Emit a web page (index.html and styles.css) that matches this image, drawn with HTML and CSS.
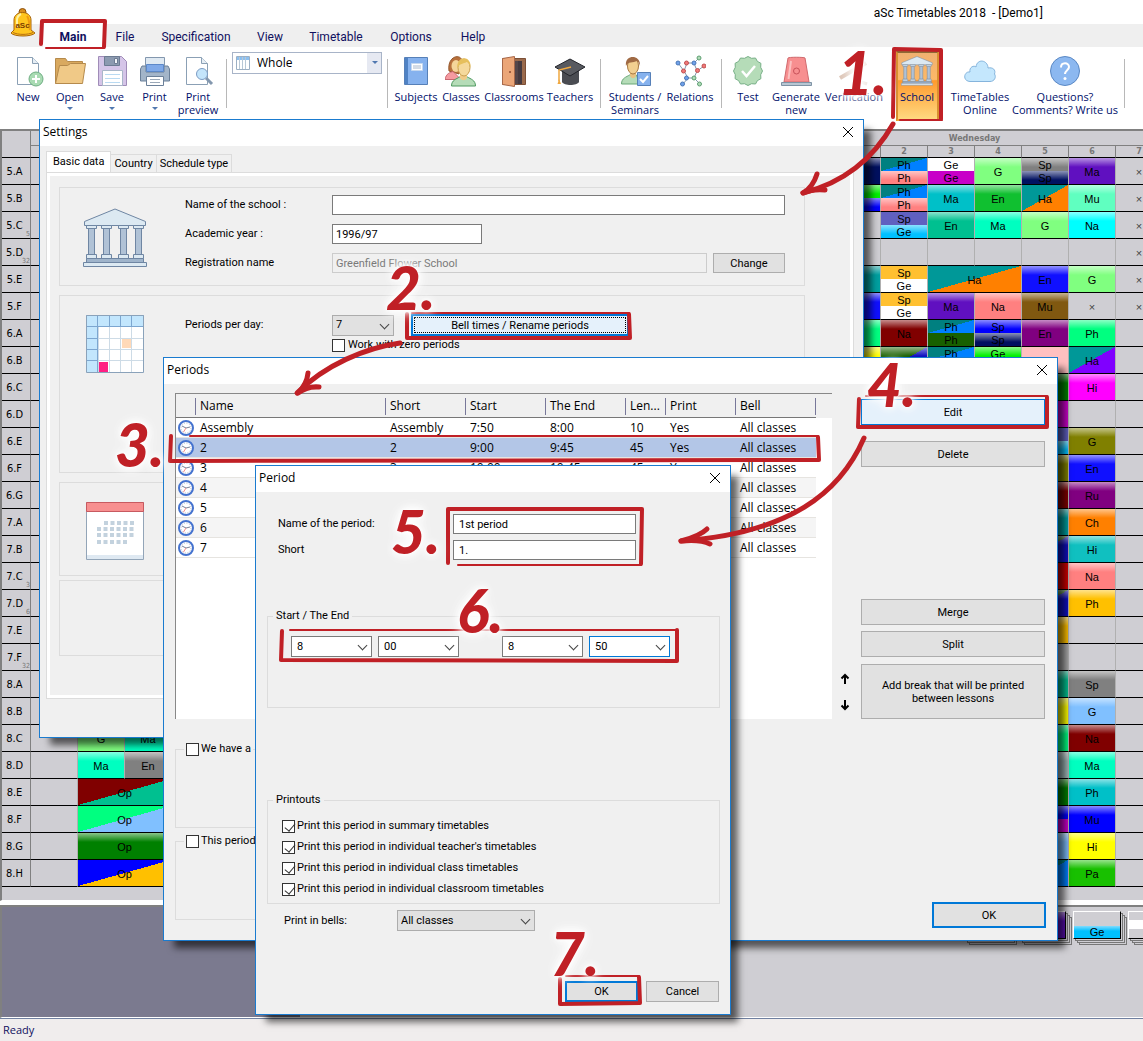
FILE: index.html
```html
<!DOCTYPE html>
<html lang="en">
<head>
<meta charset="utf-8">
<title>aSc Timetables 2018 - [Demo1]</title>
<link rel="stylesheet" href="styles.css">
</head>
<body>
<svg class="defs" aria-hidden="true">
  <symbol id="i-school" viewBox="0 0 64 60">
    <g stroke="#6f86a3" stroke-width="1" fill="#dce9f2">
      <path d="M1.500 13.500 L32 1 L62.500 13.500 V17.500 H1.500 Z"/>
      <path fill="#b0c2d6" d="M5.500 20.500h6v26h-6zM20.500 20.500h6v26h-6zM37.500 20.500h6v26h-6zM52.500 20.500h6v26h-6z"/>
      <path d="M3.500 17.500h10v3h-10zM18.500 17.500h10v3h-10zM35.500 17.500h10v3h-10zM50.500 17.500h10v3h-10zM3.500 46.500h10v4h-10zM18.500 46.500h10v4h-10zM35.500 46.500h10v4h-10zM50.500 46.500h10v4h-10z"/>
      <path fill="#9fb4cb" d="M3.500 50.500h57v4h-57z"/>
      <path d="M.5 54.500h63v4h-63z"/>
    </g>
  </symbol>
  <symbol id="i-clock" viewBox="0 0 16 16">
    <circle cx="8" cy="8" r="7" fill="#fff" stroke="#4573cf" stroke-width="2"/>
    <circle cx="8" cy="8" r="5" fill="none" stroke="#a9b3c9" stroke-dasharray="1 1.600"/>
    <path d="M4 6 L8 8 L12 7" fill="none" stroke="#7b8397"/>
    <path d="M8 8 L5.500 12" stroke="#f08a8a"/>
  </symbol>
  <symbol id="i-close" viewBox="0 0 12 12"><path d="M1 1 L11 11 M11 1 L1 11" stroke="#000" fill="none"/></symbol>
</svg>

<header class="app-head">
  <svg class="bell" viewBox="0 0 26 30" aria-hidden="true">
    <circle cx="12.500" cy="4" r="3.500" fill="#d98e1c" stroke="#8a4d08"/>
    <path d="M4 22 V12 C4 2 21 2 21 12 V22 L25 25 C22 29 4 29 1 25 Z" fill="#ffc51e" stroke="#a8640c"/>
    <path d="M7 20 V12 C7 8 9 7 11 6" fill="none" stroke="#fff2a0" stroke-width="2"/>
    <path d="M17 8 C20 12 19 18 20 22" fill="none" stroke="#f09a10" stroke-width="2"/>
    <path d="M3 24.500 C8 27 18 27 23 24.500" fill="none" stroke="#b86f10"/>
    <text x="12.500" y="20" text-anchor="middle" class="bell-text">aSc</text>
  </svg>
  <h1>aSc Timetables 2018&nbsp; - [Demo1]</h1>
  <nav class="menu">
    <a href="#" class="on">Main</a><a href="#">File</a><a href="#">Specification</a><a href="#">View</a><a href="#">Timetable</a><a href="#">Options</a><a href="#">Help</a>
  </nav>
</header>

<div class="ribbon">
  <button class="tool"><svg viewBox="0 0 32 32"><path d="M5.500 2.500h15l6 6v21h-21z" fill="#fff" stroke="#8ba0b5"/><path d="M20.500 2.500v6h6" fill="#e6eef5" stroke="#8ba0b5"/><circle cx="24" cy="24" r="7" fill="#a9dbb3" stroke="#6fae83"/><path d="M24 20v8M20 24h8" stroke="#fff" stroke-width="2"/></svg>New</button>
  <button class="tool more"><svg viewBox="0 0 32 32"><path d="M1.500 28.500v-25h10l2 3h15v5" fill="#d9a95f" stroke="#b58a4c"/><path d="M1.500 28.500l4-18h8l3-2h15l-3 20z" fill="#f0c987" stroke="#b58a4c"/></svg>Open</button>
  <button class="tool more"><svg viewBox="0 0 32 32"><path d="M2.500 1.500h23l5 5v24h-28z" fill="#d5c5e8" stroke="#a08cb8"/><path d="M8.500 1.500h15v9h-15z" fill="#8c9ab0" stroke="#6d7b92"/><path d="M18.500 3.500h3v5h-3z" fill="#f2f4f8" stroke="#6d7b92"/><path d="M6.500 15.500h20v15h-20z" fill="#fff" stroke="#a9b7c9"/><path d="M9 19.500h15M9 23.500h15M9 27.500h15" stroke="#b9daf2"/></svg>Save</button>
  <button class="tool more"><svg viewBox="0 0 32 32"><path d="M6.500 2.500h19v8h-19z" fill="#dfe9f2" stroke="#8397ae"/><path d="M3 11h4v6h18v-6h4l1.500 3v12h-29v-12z" fill="#a3b5c9" stroke="#6b8099"/><path d="M7.500 9.500h17v7h-17z" fill="#7fa9e8" stroke="#5c88c9"/><path d="M7.500 21.500h17v9h-17z" fill="#fff" stroke="#6b8099"/><path d="M11 24.500h10M11 27.500h10" stroke="#9aa8b8"/></svg>Print</button>
  <button class="tool"><svg viewBox="0 0 32 32"><path d="M4.500 2.500h15l6 6v21h-21z" fill="#fff" stroke="#8ba0b5"/><path d="M19.500 2.500v6h6" fill="#e6eef5" stroke="#8ba0b5"/><path d="M24 23l6 6" stroke="#8397ae" stroke-width="3"/><circle cx="20" cy="19" r="5.500" fill="#c4e5fb" stroke="#7c9cc4"/></svg>Print<br>preview</button>
  <i class="sep"></i>
  <span class="combo whole">
    <svg viewBox="0 0 14 14" aria-hidden="true"><path d="M.5.500h13v13h-13z" fill="#fff" stroke="#9cb0c4"/><path d="M1 1h12v3H1z" fill="#8cc0f0"/><path d="M3.500 1v12M6.500 1v12M9.500 1v12" stroke="#b8c8d6"/></svg>
    <select aria-label="View"><option>Whole</option></select>
  </span>
  <i class="sep"></i>
  <button class="tool"><svg viewBox="0 0 32 32"><path d="M4.500 2.500h23v27h-23z" fill="#86b2ee" stroke="#5680b8"/><path d="M5 3h3v26h-3z" fill="#4f82c4"/><path d="M11.500 8.500h11v7h-11z" fill="#fff" stroke="#c5d8ef"/><path d="M13 11h8M13 13h8" stroke="#a8b8cc"/></svg>Subjects</button>
  <button class="tool"><svg viewBox="0 0 32 32"><path d="M4 16C2 2 14-2 17 5l-3 14z" fill="#b8703c" stroke="#94572c"/><path d="M0 24.500c1-6 5-7 8-8l8 8z" fill="#f59aa0" stroke="#c86870"/><ellipse cx="11" cy="11" rx="4.500" ry="6" fill="#f5d59a"/><path d="M6.500 31c0-6 5-7 8-9h8c3 2 8 3 8 9z" fill="#b5dcb8" stroke="#4e9a60"/><path d="M15 18h7v5c-2 3-5 3-7 0z" fill="#f0cb88"/><ellipse cx="19" cy="12.500" rx="6" ry="8.500" fill="#f5d99c" stroke="#c9a050"/><path d="M12.500 13C11 0 27 0 25.500 13c-1-5-2-5-4-6-3 2-7 1-9 6z" fill="#e6bf5c"/></svg>Classes</button>
  <button class="tool"><svg viewBox="0 0 32 32"><path d="M4.500 3.500h23v26h-23z" fill="#9a6a4c" stroke="#7c4f36"/><path d="M13 6h11v23h-11z" fill="#54464a"/><path d="M20 6h4v23h-4z" fill="#453a40"/><path d="M4.500 3.500l12-2v30l-12-2z" fill="#eba678" stroke="#a8694a"/><circle cx="12" cy="17" r="1" fill="#8a4a30"/></svg>Classrooms</button>
  <button class="tool"><svg viewBox="0 0 32 32"><path d="M8 15v12c2 4 15 4 17 0v-12z" fill="#4a4c52"/><path d="M1 12L16 4l15 8-15 9z" fill="#585a60" stroke="#22242a"/><path d="M17 12L5 15v11" fill="none" stroke="#f0a840" stroke-width="1.500"/><path d="M3.500 29l1.500-5 2 5z" fill="#f0a840"/></svg>Teachers</button>
  <i class="sep"></i>
  <button class="tool"><svg viewBox="0 0 32 32"><path d="M2.500 29c0-6 5-7 8-9h7l3 9z" fill="#b5dcb8" stroke="#6aa878"/><path d="M11 16h6v5c-2 3-4 3-6 0z" fill="#e8c080"/><ellipse cx="14" cy="11" rx="5.500" ry="8" fill="#f2cf90" stroke="#a87840"/><path d="M7 11C5-1 22-1 21 11c-1-4-2-4-3-5-4 2-9 0-11 5z" fill="#a06a44"/><path d="M18.500 17.500h13v13h-13z" fill="#86b2ee" stroke="#5680b8"/><path d="M21 24l3 3 5-6" fill="none" stroke="#fff" stroke-width="2"/></svg>Students /<br>Seminars</button>
  <button class="tool"><svg viewBox="0 0 32 32"><path d="M4 8l6 8 4 7M12 8h8l3 8-3 7h-6M20 8l5-5M23 16l7-5M14 23l-5 6M20 23l6 6M10 16l3-8" fill="none" stroke="#8498ac"/><g fill="#f07878" stroke="#c05050"><circle cx="9.500" cy="16" r="2"/><circle cx="12.500" cy="8" r="2"/><circle cx="23.500" cy="15.500" r="2"/><circle cx="30" cy="11" r="2"/></g><g fill="#6fa0e8" stroke="#4a78b8"><circle cx="4" cy="8" r="2"/><circle cx="20" cy="8" r="2"/><circle cx="12.500" cy="23" r="2"/><circle cx="8.500" cy="29" r="2"/></g><g fill="#b0dcb8" stroke="#5f9f72"><circle cx="25" cy="3" r="2"/><circle cx="20" cy="23" r="2"/><circle cx="25.500" cy="29" r="2"/></g></svg>Relations</button>
  <i class="sep"></i>
  <button class="tool"><svg viewBox="0 0 32 32"><path d="M16 1.500l3.500 1.800 4-.3 1.900 3.400 3.500 1.900-.2 4L30.500 16l-1.800 3.700.2 4-3.500 1.900-1.900 3.400-4-.3L16 30.500l-3.500-1.800-4 .3-1.900-3.400-3.500-1.900.2-4L1.500 16l1.800-3.700-.2-4 3.500-1.900L8.500 3l4 .3z" fill="#b5dcb8" stroke="#78b088"/><path d="M10 16l4.500 5L23 11" fill="none" stroke="#fff" stroke-width="2.500"/></svg>Test</button>
  <button class="tool"><svg viewBox="0 0 32 32"><path d="M4 27L8 3c.3-1 16-1 17 0l4 24z" fill="#f78f90" stroke="#d06a6e"/><path d="M8.500 24L11 6" stroke="#fbc0c0" stroke-width="2"/><circle cx="16.500" cy="16" r="3" fill="none" stroke="#c8525a"/><path d="M1.500 27.500h30v3h-30z" fill="#b8c6d2" stroke="#7f93a5"/></svg>Generate<br>new</button>
  <button class="tool"><svg viewBox="0 0 32 32"><path d="M2 23L28 8" stroke="#dcc3b4" stroke-width="4"/><path d="M20 26l9 3" stroke="#e6d6cc" stroke-width="3"/></svg>Verification</button>
  <button class="tool school"><svg viewBox="0 0 64 60"><use href="#i-school"/></svg>School</button>
  <button class="tool"><svg viewBox="0 0 32 32"><path d="M6 26.500C-2 26 0 16 6 17 5 12 10 10 12 12 13 3 24 5 24 13c5-1 8 2 6.500 6 2 3 0 7.500-4.500 7.500z" fill="#c4e7fd" stroke="#85b4dc"/></svg>TimeTables<br>Online</button>
  <button class="tool"><svg viewBox="0 0 32 32"><circle cx="16" cy="16" r="14.500" fill="#8cb8f0" stroke="#5a88c4"/><path d="M12 12.500c0-5.500 8-5.500 8-.5 0 3-4 3.500-4 7" fill="none" stroke="#fff" stroke-width="2"/><circle cx="16" cy="23.500" r="1.500" fill="#fff"/></svg>Questions?<br>Comments? Write us</button>
  <i class="sep"></i>
</div>

<main class="board">
<table class="timetable">
<colgroup><col class="c-name"><col class="c-hour"><col class="c-hour"><col class="c-hour"><col><col class="c-hour"><col class="c-hour"><col class="c-hour"><col class="c-hour"><col class="c-hour"><col class="c-hour"><col class="c-hour"><col class="c-hour"></colgroup>
<thead>
<tr class="days"><th rowspan="2" class="corner"></th><th colspan="4"></th><th colspan="8">Wednesday</th></tr>
<tr class="hours"><th></th><th></th><th></th><th></th><th>0</th><th>1</th><th>2</th><th>3</th><th>4</th><th>5</th><th>6</th><th>7</th></tr>
</thead>
<tbody>
<tr><th>5.A</th><td><td><td><td><td><td class="navy"><td><div class="phys">Ph</div><div class="rose">Ph</div><td><div class="white">Ge</div><div class="magenta">Ge</div><td class="lime">G<td><div class="gray">Sp</div><div class="navy">Sp</div><td class="violet">Ma<td class="x">×</tr>
<tr><th>5.B</th><td><td><td><td><td><td><div class="green">&nbsp;</div><div class="blue">&nbsp;</div><td><div class="phys">Ph</div><div class="rose">Ph</div><td class="cyan">Ma<td class="leaf">En<td class="hand">Ha<td class="mint">Mu<td class="x">×</tr>
<tr><th>5.C<small>5</small></th><td><td><td><td><td><td><td><div class="slate">Sp</div><div class="sky">Ge</div><td class="jade">En<td class="aqua">Ma<td class="lime">G<td class="bright">Na<td class="x">×</tr>
<tr><th>5.D<small>32</small></th><td><td><td><td><td><td><td><td><td><td><td><td class="x">×</tr>
<tr><th>5.E</th><td><td><td><td><td><td class="teal"><td><div class="amber">Sp</div><div class="white">Ge</div><td colspan="2" class="hand">Ha<td class="royal">En<td class="lime">G<td class="x">×</tr>
<tr><th>5.F</th><td><td><td><td><td><td class="royal"><td><div class="amber">Sp</div><div class="white">Ge</div><td class="violet">Ma<td class="rose">Na<td class="brown">Mu<td class="x">×<td class="x">×</tr>
<tr><th>6.A</th><td><td><td><td><td><td class="spring"><td class="maroon">Na<td><div class="phys">Ph</div><div class="forest">Ph</div><td><div class="blue">Sp</div><div class="navy">Sp</div><td class="purple">En<td class="spring">Ph<td></tr>
<tr><th>6.B</th><td><td><td><td><td><td class="yellow"><td class="forest-blue"><td><div class="phys">Ph</div><div class="forest">Ph</div><td><div class="green">Ge</div><div class="gray">&nbsp;</div><td class="blush"><td class="hand-violet">Ha<td></tr>
<tr><th>6.C</th><td><td><td><td><td><td><td><td><td><td class="emerald"><td class="pink">Hi<td></tr>
<tr><th>6.D</th><td><td><td><td><td><td><td><td><td><td class="magenta"><td><td></tr>
<tr><th>6.E</th><td><td><td><td><td><td><td><td><td><td><div class="slate">&nbsp;</div><div class="sky">&nbsp;</div><td class="olive">G<td></tr>
<tr><th>6.F</th><td><td><td><td><td><td><td><td><td><td class="olive"><td class="royal">En<td></tr>
<tr><th>6.G</th><td><td><td><td><td><td><td><td><td><td class="maroon"><td class="purple">Ru<td></tr>
<tr><th>7.A</th><td><td><td><td><td><td><td><td><td><td class="teal"><td class="orange">Ch<td></tr>
<tr><th>7.B</th><td><td><td><td><td><td><td><td><td><td class="forest-blue"><td class="turquoise">Hi<td></tr>
<tr><th>7.C<small>3</small></th><td><td><td><td><td><td><td><td><td><td class="red"><td class="rose">Na<td></tr>
<tr><th>7.D<small>6</small></th><td><td><td><td><td><td><td><td><td><td class="forest-blue"><td class="gold">Ph<td></tr>
<tr><th>7.E</th><td><td><td><td><td><td><td><td><td><td class="gold"><td><td></tr>
<tr><th>7.F<small>32</small></th><td><td><td><td><td><td><td><td><td><td class="ash"><td><td></tr>
<tr><th>8.A</th><td><td><td><td><td><td><td><td><td><td class="jade"><td class="gray">Sp<td></tr>
<tr><th>8.B</th><td><td><td><td><td><td><td><td><td><td class="yellow"><td class="pale">G<td></tr>
<tr><th>8.C</th><td><td class="lime">G<td class="aqua">Ma<td><td><td><td><td><td><td class="spring"><td class="maroon">Na<td></tr>
<tr><th>8.D</th><td><td class="aqua">Ma<td class="gray">En<td><td><td><td><td><td><td class="mist"><td class="aqua">Ma<td></tr>
<tr><th>8.E</th><td><td colspan="2" class="maroon-jade">Op<td><td><td><td><td><td><td class="emerald"><td class="cyan">Ph<td></tr>
<tr><th>8.F</th><td><td colspan="2" class="spring-pale">Op<td><td><td><td><td><td><td><div class="blue">&nbsp;</div><div class="magenta">&nbsp;</div><td class="blue">Mu<td></tr>
<tr><th>8.G</th><td><td colspan="2" class="emerald">Op<td><td><td><td><td><td><td class="pale"><td class="yellow">Hi<td></tr>
<tr><th>8.H</th><td><td colspan="2" class="blue-gold">Op<td><td><td><td><td><td><td class="phys"><td class="grass">Pa<td></tr>
</tbody>
</table>
</main>

<section class="tray">
  <div class="tray-info"></div>
  <div class="tray-cards">
    <span class="card violet"></span><span class="card violet"></span><span class="card half">Ge</span><span class="card plain"></span>
  </div>
</section>
<footer class="status">Ready</footer>

<section class="window settings">
  <header><h2>Settings</h2><button aria-label="Close settings"><svg><use href="#i-close"/></svg></button></header>
  <div class="tabs"><button class="on">Basic data</button><button>Country</button><button>Schedule type</button></div>
  <div class="panel">
    <div class="box school-box">
      <svg class="pic-school" viewBox="0 0 64 60" aria-hidden="true"><use href="#i-school"/></svg>
      <div class="rows">
        <div class="row"><label for="school">Name of the school :</label><input id="school" class="grow"></div>
        <div class="row"><label for="year">Academic year :</label><input id="year" class="year" value="1996/97"></div>
        <div class="row"><label for="reg">Registration name</label><input id="reg" class="grow" disabled value="Greenfield Flower School"><button class="btn change">Change</button></div>
      </div>
    </div>
    <div class="box periods-box">
      <svg class="pic" viewBox="0 0 58 58" aria-hidden="true"><path d="M.5.500h57v57h-57z" fill="#fff"/><path d="M.5.500h57v11h-57zM.5.500h11v57h-11z" fill="#c2e6fd"/><path d="M12.500 12v45M23.500 12v45M34.500 12v45M45.500 12v45M12 23.500h45M12 34.500h45M12 45.500h45" stroke="#cddbe6"/><path d="M36 24h9v9h-9z" fill="#ffd9b8"/><path d="M13 47h9v10h-9z" fill="#ff1f83"/><path d="M.5.500h57v11h-57zM11.500 0v57M23.500 0v11M34.500 0v11M45.500 0v11M0 23.500h11M0 34.500h11M0 45.500h11" fill="none" stroke="#7ca6d0"/><path d="M.5.500h57v57h-57z" fill="none" stroke="#8aa2ba"/></svg>
      <div class="rows">
        <div class="row"><label for="ppd">Periods per day:</label><span class="combo ppd"><select id="ppd"><option>7</option></select></span><button class="btn bell-times">Bell times / Rename periods</button></div>
        <label class="check zero"><input type="checkbox">Work with zero periods</label>
      </div>
    </div>
    <div class="box days-box">
      <svg class="pic" viewBox="0 0 58 58" aria-hidden="true"><path d="M.5.500h57v57h-57z" fill="#fff" stroke="#93a5b8"/><path d="M1 53h56v4H1z" fill="#dfe9f2"/><path d="M.5.500h57v9h-57z" fill="#f78f8f" stroke="#c75a60"/><path d="M18 21h30M11 27h37M11 33h37M11 40h32" stroke="#c3d2de" stroke-width="4" stroke-dasharray="4 2.500"/></svg>
    </div>
    <div class="box last-box"></div>
  </div>
</section>

<section class="window periods">
  <header><h2>Periods</h2><button aria-label="Close periods"><svg><use href="#i-close"/></svg></button></header>
  <div class="periods-top">
    <div class="list">
      <table>
        <colgroup><col class="w20"><col class="w190"><col class="w80"><col class="w80"><col class="w80"><col class="w40"><col class="w70"><col class="w80"></colgroup>
        <thead><tr><th></th><th>Name</th><th>Short</th><th>Start</th><th>The End</th><th>Len...</th><th>Print</th><th>Bell</th></tr></thead>
        <tbody>
        <tr><td><svg><use href="#i-clock"/></svg></td><td>Assembly</td><td>Assembly</td><td>7:50</td><td>8:00</td><td>10</td><td>Yes</td><td>All classes</td></tr>
        <tr class="sel"><td><svg><use href="#i-clock"/></svg></td><td>2</td><td>2</td><td>9:00</td><td>9:45</td><td>45</td><td>Yes</td><td>All classes</td></tr>
        <tr><td><svg><use href="#i-clock"/></svg></td><td>3</td><td>3</td><td>10:00</td><td>10:45</td><td>45</td><td>Yes</td><td>All classes</td></tr>
        <tr><td><svg><use href="#i-clock"/></svg></td><td>4</td><td></td><td></td><td></td><td></td><td></td><td>All classes</td></tr>
        <tr><td><svg><use href="#i-clock"/></svg></td><td>5</td><td></td><td></td><td></td><td></td><td></td><td>All classes</td></tr>
        <tr><td><svg><use href="#i-clock"/></svg></td><td>6</td><td></td><td></td><td></td><td></td><td></td><td>All classes</td></tr>
        <tr><td><svg><use href="#i-clock"/></svg></td><td>7</td><td></td><td></td><td></td><td></td><td></td><td>All classes</td></tr>
        </tbody>
      </table>
    </div>
    <div class="movers">
      <button aria-label="Move up"><svg viewBox="0 0 10 12"><path d="M5 11V2M1.500 5.500L5 2l3.500 3.500" fill="none" stroke="#000" stroke-width="2"/></svg></button>
      <button aria-label="Move down"><svg viewBox="0 0 10 12"><path d="M5 1v9M1.500 6.500L5 10l3.500-3.500" fill="none" stroke="#000" stroke-width="2"/></svg></button>
    </div>
    <div class="actions">
      <button class="btn hot">Edit</button>
      <button class="btn">Delete</button>
      <button class="btn merge">Merge</button>
      <button class="btn split">Split</button>
      <button class="btn tall">Add break that will be printed<br>between lessons</button>
    </div>
  </div>
  <div class="periods-bottom">
    <div class="options">
      <fieldset><legend><label class="check"><input type="checkbox">We have a</label></legend></fieldset>
      <fieldset><legend><label class="check"><input type="checkbox">This period</label></legend></fieldset>
    </div>
    <button class="btn default ok">OK</button>
  </div>
</section>

<section class="window period">
  <header><h2>Period</h2><button aria-label="Close period"><svg><use href="#i-close"/></svg></button></header>
  <div class="names">
    <label for="pname">Name of the period:</label><input id="pname" value="1st period">
    <label for="pshort">Short</label><input id="pshort" value="1.">
  </div>
  <fieldset class="times"><legend>Start / The End</legend>
    <div class="time-row">
      <span class="combo light"><select aria-label="Start hour"><option>8</option></select></span>
      <span class="combo light"><select aria-label="Start minute"><option>00</option></select></span>
      <span class="combo light end"><select aria-label="End hour"><option>8</option></select></span>
      <span class="combo light focus"><select aria-label="End minute"><option>50</option></select></span>
    </div>
  </fieldset>
  <fieldset class="printouts"><legend>Printouts</legend>
    <div class="check-list">
      <label class="check"><input type="checkbox" checked>Print this period in summary timetables</label>
      <label class="check"><input type="checkbox" checked>Print this period in individual teacher's timetables</label>
      <label class="check"><input type="checkbox" checked>Print this period in individual class timetables</label>
      <label class="check"><input type="checkbox" checked>Print this period in individual classroom timetables</label>
    </div>
  </fieldset>
  <div class="bells"><label for="bells">Print in bells:</label><span class="combo"><select id="bells"><option>All classes</option></select></span></div>
  <div class="buttons"><button class="btn default">OK</button><button class="btn">Cancel</button></div>
</section>

<div class="notes">
  <svg viewBox="0 0 1143 1041" width="1143" height="1041" aria-hidden="true">
    <g fill="none" stroke="#c02026" stroke-linecap="round" stroke-linejoin="round">
      <g stroke-width="4">
        <path d="M41 44 L42 21 L105 21 L104 47"/>
        <path d="M893 117 L894 49 L941 50 L941 119"/>
        <path d="M407 314 L407 338 L630 338 L629 314"/>
        <path d="M171 436 L170 461 L819 460 L818 437"/>
        <path d="M859 399 L858 427 L1047 427 L1047 397"/>
        <path d="M448 563 L448 509 L642 509 L641 564"/>
        <path d="M282 631 L281 660 L677 661 L677 630"/>
        <path d="M560 979 L560 1004 L640 1003 L639 977"/>
      </g>
      <g stroke-width="2">
        <path d="M46 48 L104 48"/>
        <path d="M900 120 L942 120"/>
        <path d="M412 313 L629 313"/>
        <path d="M190 436 L818 436"/>
        <path d="M866 396 L1047 396"/>
        <path d="M458 565 L641 565"/>
        <path d="M290 630 L677 630"/>
        <path d="M566 976 L639 976"/>
      </g>
      <g stroke-width="5">
        <path d="M893 124 C876 154 850 181 803 193"/>
        <path d="M817 174 Q813 187 803 193 Q812 189 825 190"/>
        <path d="M400 343 C365 348 325 365 297 393"/>
        <path d="M308 373 Q307 384 298 393 Q307 386 319 387"/>
        <path d="M864 438 C840 493 790 533 681 541"/>
        <path d="M707 529 Q700 536 681 541 Q700 539 710 544"/>
      </g>
    </g>
  </svg>
  <b class="step s1">1.</b>
  <b class="step s2">2.</b>
  <b class="step s3">3.</b>
  <b class="step s4">4.</b>
  <b class="step s5">5.</b>
  <b class="step s6">6.</b>
  <b class="step s7">7.</b>
</div>
</body>
</html>
```
FILE: styles.css
```css
* { box-sizing: border-box; }

body {
  position: relative;
  display: flex;
  flex-direction: column;
  min-height: 100vh;
  margin: 0;
  overflow: hidden;
  background: #fff;
  color: #000;
  font: 12px/16px "Open Sans", "Noto Sans", sans-serif;
}

button, input, select { margin: 0; padding: 0; color: inherit; font: inherit; }
h1, h2 { margin: 0; font-size: 12px; font-weight: 400; }
.defs { position: absolute; width: 0; height: 0; }

/* Application head */
.app-head { position: relative; font-family: Roboto, "Open Sans", sans-serif; }
.app-head h1 { height: 24px; padding: 5px 100px 0 0; text-align: right; }
.bell { position: absolute; left: 10px; top: 8px; z-index: 1; width: 26px; height: 30px; }
.bell-text { fill: #7a3c00; font: bold 8px "Liberation Sans", sans-serif; }
.menu {
  display: grid;
  grid-template-columns: 60px 44px 98px 50px 82px 68px 56px;
  height: 23px;
  padding-left: 43px;
  background: #efefef;
}
.menu a { padding-top: 5px; color: #101060; text-align: center; text-decoration: none; }
.menu .on { background: #fff; font-weight: 700; }

/* Ribbon */
.ribbon {
  display: grid;
  grid-template-columns: 42px 42px 42px 43px 44px 12px 150px 11px 46px 44px 62px 50px 10px 60px 50px 13px 40px 56px 60px 66px 60px 110px 9px;
  height: 82px;
  padding: 4px 0 0 7px;
  overflow: hidden;
}
.tool {
  display: flex;
  flex-direction: column;
  align-items: center;
  align-self: start;
  justify-self: center;
  height: 70px;
  padding-top: 4px;
  border: 0;
  background: none;
  color: #000f6b;
  font-size: 11px;
  line-height: 13px;
  white-space: nowrap;
}
.tool svg { flex: none; width: 32px; height: 32px; margin-bottom: 3px; }
.more::after { content: ""; margin-top: 4px; border: 3px solid transparent; border-top-color: #5078b0; }
.school {
  width: 43px;
  padding-top: 2px;
  border: 2px solid #b5762a;
  border-color: #8d6a35 #d89030 #f0a830;
  background: linear-gradient(#f0b070, #fdb968 40%, #ff9a2e 42%, #ffd980);
}
.sep { justify-self: center; width: 1px; height: 49px; margin-top: 8px; background: #b8b8b8; }

/* Controls */
.combo { position: relative; display: block; }
.combo select {
  display: block;
  width: 100%;
  height: 21px;
  padding-left: 3px;
  appearance: none;
  border: 1px solid #acacac;
  border-radius: 0;
  background: #e1e1e1;
}
.combo::after {
  content: "";
  position: absolute;
  right: 6px;
  top: 6px;
  width: 6px;
  height: 6px;
  border: solid #444;
  border-width: 0 1px 1px 0;
  transform: rotate(45deg);
  pointer-events: none;
}
.whole { margin-top: 1px; }
.whole svg { position: absolute; left: 4px; top: 4px; width: 14px; height: 14px; }
.whole select { height: 22px; padding-left: 24px; border-color: #a8b4c8; background: linear-gradient(to left, #e6e9f2 14px, #fff 14px); }
.whole::after { right: 4px; top: 9px; width: 0; height: 0; border: 3px solid transparent; border-top-color: #5078b0; transform: none; }
.light select { padding-left: 5px; border-color: #7a7a7a; background: #fff; }
.focus select { border-color: #0078d7; }
.btn { height: 26px; border: 1px solid #adadad; background: #e1e1e1; line-height: 13px; }
.hot { border-color: #0078d7; background: #e5f1fb; }
.default { border: 2px solid #0078d7; }
.window input:not([type]) { height: 20px; padding: 0 3px; border: 1px solid #7a7a7a; border-radius: 0; background: #fff; }
.window input:disabled { border-color: #ccc; background: #f0f0f0; color: #7a7a7a; }
.check { display: flex; align-items: center; gap: 2px; }
.check input { position: relative; flex: none; width: 13px; height: 13px; appearance: none; border: 1px solid #333; background: #fff; }
.check input:checked::after {
  content: "";
  position: absolute;
  left: 4px;
  top: 0;
  width: 5px;
  height: 9px;
  border: solid #333;
  border-width: 0 1px 1px 0;
  transform: rotate(40deg);
}

/* Timetable */
.board { height: 772px; border: solid #808080; border-width: 2px 0 0 2px; border-bottom: 1px solid #fff; background: #cfced3; overflow: hidden; }
.timetable { width: calc(100% + 20px); border-spacing: 0; table-layout: fixed; font: 11px/13px "Liberation Sans", sans-serif; }
.c-name { width: 29px; }
.c-hour { width: 47px; }
.timetable th { position: relative; height: 27px; padding: 0; border: solid #808080; border-width: 0 1px 1px 0; font-weight: 400; }
.timetable tbody th { border-bottom-color: #000; padding: 0 3px 0 0; font: 11px/11px "DejaVu Sans Condensed", "DejaVu Sans", sans-serif; }
.timetable small { position: absolute; right: 0; bottom: 0; color: #777; font-size: 7px; line-height: 7px; }
.timetable thead th { height: 12px; color: #777; font: bold 8px/10px "DejaVu Sans", sans-serif; }
.timetable .days th { height: 15px; padding-top: 2px; }
.timetable .hours th, .timetable .corner { border-bottom-color: #000; }
.timetable td { height: 27px; padding: 0; border: solid #b0b0b0; border-width: 0 1px 0 0; border-bottom: 1px solid #000; text-align: center; background-clip: padding-box; }
.timetable td[class] { padding-top: 2px; }
.timetable td div { height: 13px; line-height: 15px; overflow: hidden; }
.timetable .x { color: #444; }

[class] { --gloss: linear-gradient(rgba(255, 255, 255, .55), rgba(255, 255, 255, 0) 9px); }
.navy { background: var(--gloss) #001060; }
.green { background: var(--gloss) #00f000; }
.blue { background: var(--gloss) #0000ff; }
.royal { background: var(--gloss) #1010ff; }
.rose { background: var(--gloss) #ff8080; }
.white { background: #fff; }
.magenta { background: #c800c8; }
.lime { background: var(--gloss) #80ff80; }
.gray { background: var(--gloss) #808080; }
.violet { background: var(--gloss) #6010c0; }
.cyan { background: var(--gloss) #00c0c8; }
.leaf { background: var(--gloss) #10c030; }
.mint { background: var(--gloss) #60ffc0; }
.slate { background: #6060c0; }
.sky { background: var(--gloss) #00c0ff; }
.jade { background: var(--gloss) #00c090; }
.aqua { background: var(--gloss) #00ffc0; }
.bright { background: var(--gloss) #00ffff; }
.teal { background: var(--gloss) #00a0a0; }
.amber { background: #ffc030; }
.brown { background: var(--gloss) #805810; }
.spring { background: var(--gloss) #00ff80; }
.maroon { background: var(--gloss) #800000; }
.forest { background: #186000; }
.purple { background: var(--gloss) #800080; }
.yellow { background: var(--gloss) #ffff00; }
.blush { background: #ffc0c0; }
.emerald { background: var(--gloss) #008000; }
.pink { background: var(--gloss) #ff00ff; }
.olive { background: var(--gloss) #808000; }
.orange { background: var(--gloss) #ff8000; }
.turquoise { background: var(--gloss) #10c0c0; }
.red { background: #d00000; }
.gold { background: var(--gloss) #ffc000; }
.pale { background: var(--gloss) #80c0ff; }
.mist { background: var(--gloss) #a0b8b8; }
.ash { background: #a8a8a8; }
.grass { background: var(--gloss) #18c000; }
.phys { background: linear-gradient(to bottom right, #008080 50%, #0080ff 50%); }
.hand { background: linear-gradient(to bottom right, #009898 50%, #ff8000 50%); }
.hand-violet { background: linear-gradient(to bottom right, #009898 50%, #8000ff 50%); }
.forest-blue { background: var(--gloss), linear-gradient(to bottom right, #186000 50%, #1010c0 50%); }
.maroon-jade { background: linear-gradient(to bottom right, #800000 50%, #00c090 50%); }
.spring-pale { background: linear-gradient(to bottom right, #00ff80 50%, #80c0ff 50%); }
.blue-gold { background: linear-gradient(to bottom right, #0000ff 50%, #ffc000 50%); }

/* Tray and status bar */
.tray { display: flex; flex: 1; margin-top: 4px; border: solid #808080; border-width: 2px 0 0 2px; border-bottom: 1px solid #fff; background: #cfced3; }
.tray-info { width: 298px; background: #7b7a8f; }
.tray-cards { display: flex; flex: 1; justify-content: flex-end; gap: 7px; padding-top: 4px; margin-right: -33px; }
.card {
  flex: none;
  width: 48px;
  height: 28px;
  border: 1px solid #fff;
  border-color: #fff #000 #000 #fff;
  box-shadow: 2px 2px 0 -1px #cfced3, 2px 2px 0 #777, 4px 4px 0 -1px #cfced3, 4px 4px 0 #777, 6px 6px 0 -1px #cfced3, 6px 6px 0 #777;
  font: 11px/14px "Liberation Sans", sans-serif;
  text-align: center;
}
.half { padding-top: 13px; background: linear-gradient(#cfced3 14px, #80dcff 14px, #00c0ff 19px); }
.plain { background: linear-gradient(#cfced3 8px, #fff 8px, #fff 17px, #cfced3 17px); }
.status { height: 23px; padding: 3px 3px 0; border-top: 1px solid #7080a0; background: #f0eded; color: #101060; font-size: 11px; }

/* Windows */
.window {
  position: absolute;
  border: 1px solid #1a7bcf;
  background: #f0f0f0;
  box-shadow: 9px 9px 7px -2px rgba(0, 0, 0, .6);
  font: 11px/14px Roboto, "Liberation Sans", sans-serif;
}
.window > header { display: flex; align-items: center; justify-content: space-between; height: 26px; padding: 0 9px 2px 3px; background: #fff; }
.window h2 { font-family: "Open Sans", "Noto Sans", sans-serif; font-size: 12px; }
.window > header button { width: 12px; height: 12px; border: 0; background: none; }
.window > header svg { display: block; width: 12px; height: 12px; }
fieldset { min-width: 0; margin: 0; padding: 0; border: 1px solid #dcdcdc; }

.settings { left: 39px; top: 119px; width: 825px; height: 619px; padding-bottom: 38px; display: flex; flex-direction: column; }
.tabs { display: flex; align-items: flex-end; height: 26px; padding-left: 6px; }
.tabs button { height: 18px; padding: 0 3px; border: 1px solid #dcdcdc; border-bottom: 0; border-left: 0; background: #f0f0f0; }
.tabs .on { height: 21px; padding: 0 6px; border-left: 1px solid #dcdcdc; background: #fff; }
.panel { flex: 1; margin: 0 9px 0 6px; padding: 11px 48px 0 12px; border: 1px solid #dcdcdc; outline: 3px solid #fff; outline-offset: -4px; }
.box { display: flex; border: 1px solid #dcdcdc; }
.rows { flex: 1; }
.row { display: flex; align-items: center; }
.row > label { width: 147px; }
.grow { flex: 1; min-width: 0; }
.year { width: 150px; }
.school-box { height: 99px; margin-top: 3px; padding: 7px 19px 0 23px; }
.school-box .rows { display: flex; flex-direction: column; gap: 9px; }
.pic-school { width: 64px; height: 60px; margin: 13px 38px 0 0; }
.change { width: 72px; height: 20px; margin-left: 6px; }
.pic { width: 58px; height: 58px; margin: 1px 41px 0 0; }
.periods-box { height: 178px; margin-top: 9px; padding: 18px 19px 0 26px; }
.ppd { width: 62px; }
.bell-times { width: 218px; height: 22px; margin-left: 17px; border: 2px solid #0078d7; background: #e5f1fb; outline: 1px dotted #000; outline-offset: -4px; }
.zero { margin: 2px 0 0 147px; gap: 3px; }
.days-box { height: 94px; margin-top: 9px; padding: 18px 26px; }
.last-box { height: 76px; margin-top: 4px; }

.periods { left: 163px; top: 357px; width: 895px; height: 584px; display: flex; flex-direction: column; }
.periods-top { display: flex; height: 335px; padding: 9px 12px 0 11px; }
.list { flex: 1; padding-right: 16px; border: 1px solid #888; border-width: 1px 0 0 1px; background: linear-gradient(#f0f0f0 24px, #fff 24px); font: 12px/14px "Open Sans", "Noto Sans", sans-serif; }
.list table { width: 100%; border-spacing: 0; table-layout: fixed; }
.list th { height: 24px; padding: 0 0 0 4px; border-bottom: 1px solid #777; background: linear-gradient(#777799, #777799) right 4px / 1px 17px no-repeat; font-weight: 400; text-align: left; }
.list td { height: 20px; padding: 0 0 0 4px; border-bottom: 1px solid #e6e4e0; white-space: nowrap; }
.list tr > :first-child { padding-left: 2px; }
.list td svg { display: block; width: 16px; height: 16px; }
.list tbody tr:nth-child(even) { background: #f5f5f5; }
.list tbody tr.sel:nth-child(even) { background: #b3c6e7; }
.w20 { width: 20px; }
.w190 { width: 190px; }
.w80 { width: 80px; }
.w40 { width: 40px; }
.w70 { width: 70px; }
.movers { display: flex; flex-direction: column; justify-content: flex-end; gap: 14px; width: 29px; padding: 0 0 8px 8px; }
.movers button { width: 10px; height: 12px; border: 0; background: none; }
.movers svg { display: block; width: 10px; height: 12px; }
.actions { display: flex; flex-direction: column; width: 184px; padding-top: 6px; }
.actions .hot { margin-bottom: 16px; }
.merge { margin-top: 132px; }
.split { margin: 6px 0 7px; }
.actions .tall { height: 55px; }
.periods-bottom { display: flex; align-items: flex-end; justify-content: space-between; flex: 1; padding: 23px 11px 12px 11px; }
.options { display: flex; flex-direction: column; gap: 6px; width: 520px; height: 100%; }
.options fieldset { height: 86px; padding-left: 8px; }
.options .check { height: 14px; }
.ok { width: 114px; }

.period { left: 255px; top: 465px; width: 476px; height: 550px; padding: 0 10px 0 11px; }
.period > header { margin: 0 -10px 0 -11px; }
.names { display: grid; grid-template-columns: 175px 183px; gap: 6px 0; align-items: center; padding: 22px 0 0 11px; }
.names input:not([type]) { padding: 0 5px; }
.period legend { margin-left: 5px; padding: 0 3px; line-height: 14px; }
.times { height: 99px; margin-top: 49px; }
.time-row { display: flex; gap: 6px; padding: 13px 0 0 23px; }
.time-row .combo { width: 81px; }
.time-row .end { margin-left: 37px; }
.printouts { height: 111px; margin-top: 85px; }
.check-list { display: flex; flex-direction: column; gap: 7px; padding: 12px 0 0 14px; }
.check-list .check { height: 14px; }
.bells { display: flex; align-items: center; margin-top: 6px; padding-left: 17px; }
.bells label { width: 113px; }
.bells .combo { width: 138px; }
.buttons { display: flex; justify-content: flex-end; gap: 8px; margin-top: 50px; padding-right: 1px; }
.buttons .btn { width: 73px; height: 21px; }

/* Tutorial marks over the windows */
.notes { position: absolute; left: 0; top: 0; pointer-events: none; }
.notes svg { display: block; }
.step {
  position: absolute;
  color: #c02026;
  font: italic 900 60px/60px Lato, "Open Sans", sans-serif;
  text-shadow: 0 0 4px #fff, 0 0 8px #fff, 0 0 12px #fff, 0 0 16px #fff;
}
.s1 { left: 838px; top: 42px; }
.s2 { left: 386px; top: 257px; }
.s3 { left: 115px; top: 414px; }
.s4 { left: 867px; top: 354px; }
.s5 { left: 391px; top: 501px; }
.s6 { left: 457px; top: 580px; }
.s7 { left: 550px; top: 923px; }
```
